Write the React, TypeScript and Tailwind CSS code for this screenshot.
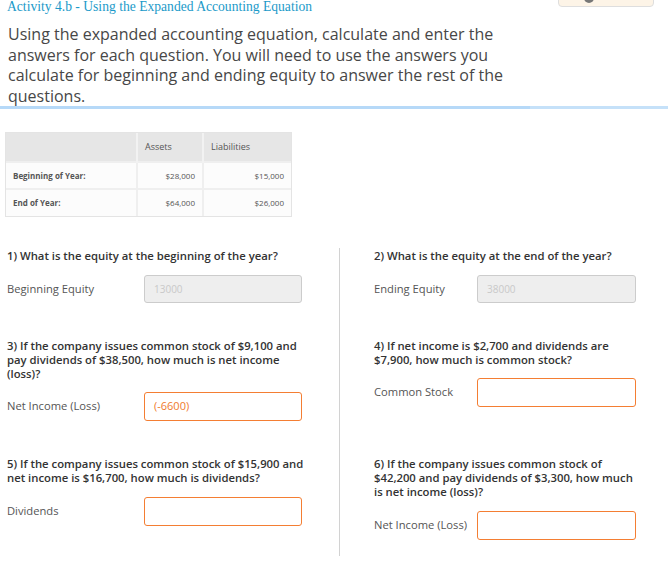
import React from "react";

const font = { fontFamily: '"Open Sans", "Liberation Sans", sans-serif' };

function Field({
  label,
  labelWidth,
  value,
  disabled,
  inputWidth,
}: {
  label: string;
  labelWidth: string;
  value?: string;
  disabled?: boolean;
  inputWidth: string;
}) {
  return (
    <div className="flex items-center">
      <span className={`${labelWidth} shrink-0 text-[11.2px] text-[#555]`}>{label}</span>
      {disabled ? (
        <div
          className={`${inputWidth} h-[28px] rounded-[3px] border border-[#cccccc] bg-[#eeeeee] px-[9px] flex items-center text-[10px] text-[#c9c9c9]`}
        >
          {value}
        </div>
      ) : (
        <div
          className={`${inputWidth} h-[29px] rounded-[3px] border border-[#f47e33] bg-white px-[9px] flex items-center text-[11px] text-[#f07a2c]`}
        >
          {value}
        </div>
      )}
    </div>
  );
}

function Question({ children, width }: { children: React.ReactNode; width: string }) {
  return <p className={`${width} text-[11.3px] font-semibold leading-[14px] text-[#333]`}>{children}</p>;
}

export default function App() {
  return (
    <div className="w-[668px] h-[568px] overflow-hidden bg-white" style={font}>
      {/* header */}
      <div className="flex items-start justify-between pl-[7px] pr-[14px]">
        <h1
          className="text-[13.6px] leading-[13px] text-[#1b9ac9]"
          style={{ fontFamily: '"Liberation Serif", "DejaVu Serif", serif' }}
        >
          Activity 4.b - Using the Expanded Accounting Equation
        </h1>
        <div className="relative -mt-[20px] h-[27px] w-[96px] rounded-[4px] border border-[#dedede] bg-[#fdf4e7]">
          <span className="absolute left-[25px] top-[12px] h-[10px] w-[10px] rounded-full bg-[#777]" />
        </div>
      </div>

      <p className="mt-[11px] w-[515px] pl-[8px] text-[16px] leading-[20.5px] text-[#474747]">
        Using the expanded accounting equation, calculate and enter the answers for each question. You will need to use
        the answers you calculate for beginning and ending equity to answer the rest of the questions.
      </p>

      <div className="flex items-end">
        <div className="h-[3px] w-[530px] bg-[#b6d9f8]" />
        <div className="h-[3px] flex-1 bg-[#c5e1f9]" />
      </div>

      {/* table */}
      <div className="ml-[5px] mt-[23px] w-[287px] border border-[#e4e4e4]">
        <table className="w-full border-collapse text-[#555]">
          <thead>
            <tr className="h-[29px] bg-[#e6e6e6]">
              <th className="w-[131px] border-r-2 border-[#f2f2f2]" />
              <th className="w-[66px] border-r-2 border-[#f2f2f2] pl-[7px] text-left text-[9px] font-normal">Assets</th>
              <th className="pl-[7px] text-left text-[9px] font-normal">Liabilities</th>
            </tr>
          </thead>
          <tbody className="bg-[#fcfcfc]">
            {[
              ["Beginning of Year:", "$28,000", "$15,000"],
              ["End of Year:", "$64,000", "$26,000"],
            ].map((r) => (
              <tr key={r[0]} className="h-[27px] border-t-2 border-[#efefef]">
                <td className="border-r-2 border-[#efefef] pl-[7px] text-[8px] font-bold">{r[0]}</td>
                <td className="border-r-2 border-[#efefef] pr-[7px] text-right text-[8px]">{r[1]}</td>
                <td className="pr-[7px] text-right text-[8px]">{r[2]}</td>
              </tr>
            ))}
          </tbody>
        </table>
      </div>

      {/* questions */}
      <div className="mt-[31px]">
        <div className="grid h-[90px] grid-cols-[340px_1fr]">
          <div className="border-r border-[#d2d2d2] pl-[7px] pt-[1px]">
            <Question width="w-[320px]">1) What is the equity at the beginning of the year?</Question>
            <div className="mt-[12px]">
              <Field label="Beginning Equity" labelWidth="w-[137px]" inputWidth="w-[158px]" value="13000" disabled />
            </div>
          </div>
          <div className="pl-[34px] pt-[1px]">
            <Question width="w-[270px]">2) What is the equity at the end of the year?</Question>
            <div className="mt-[12px]">
              <Field label="Ending Equity" labelWidth="w-[103px]" inputWidth="w-[159px]" value="38000" disabled />
            </div>
          </div>
        </div>

        <div className="grid h-[118px] grid-cols-[340px_1fr]">
          <div className="border-r border-[#d2d2d2] pl-[7px] pt-[1px]">
            <Question width="w-[300px]">
              3) If the company issues common stock of $9,100 and pay dividends of $38,500, how much is net income
              (loss)?
            </Question>
            <div className="mt-[11px]">
              <Field label="Net Income (Loss)" labelWidth="w-[137px]" inputWidth="w-[158px]" value="(-6600)" />
            </div>
          </div>
          <div className="pl-[34px] pt-[1px]">
            <Question width="w-[264px]">4) If net income is $2,700 and dividends are $7,900, how much is common stock?</Question>
            <div className="mt-[11px]">
              <Field label="Common Stock" labelWidth="w-[103px]" inputWidth="w-[159px]" />
            </div>
          </div>
        </div>

        <div className="grid h-[100px] grid-cols-[340px_1fr]">
          <div className="border-r border-[#d2d2d2] pl-[7px] pt-[1px]">
            <Question width="w-[304px]">
              5) If the company issues common stock of $15,900 and net income is $16,700, how much is dividends?
            </Question>
            <div className="mt-[12px]">
              <Field label="Dividends" labelWidth="w-[137px]" inputWidth="w-[158px]" />
            </div>
          </div>
          <div className="pl-[34px] pt-[1px]">
            <Question width="w-[266px]">
              6) If the company issues common stock of $42,200 and pay dividends of $3,300, how much is net income
              (loss)?
            </Question>
            <div className="mt-[12px]">
              <Field label="Net Income (Loss)" labelWidth="w-[103px]" inputWidth="w-[159px]" />
            </div>
          </div>
        </div>
      </div>
    </div>
  );
}
